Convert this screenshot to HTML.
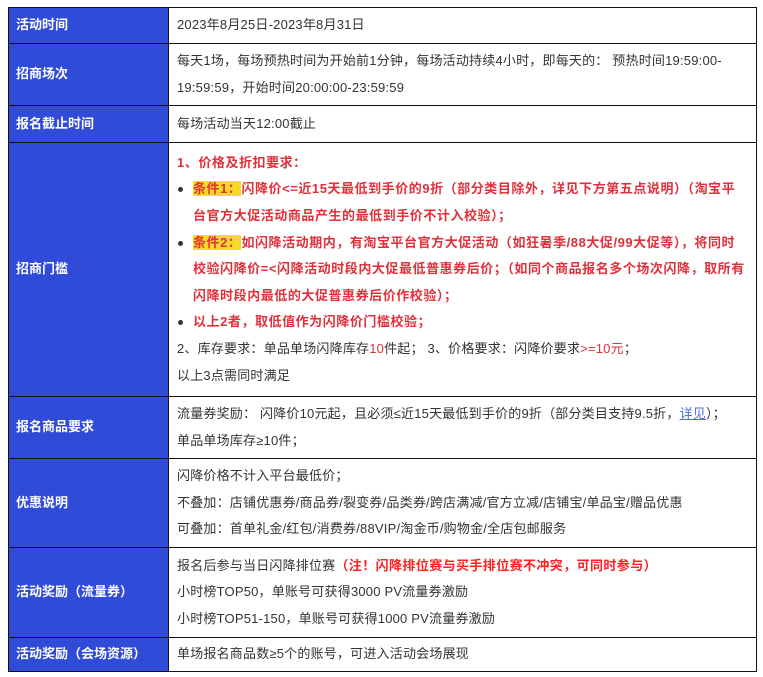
<!DOCTYPE html>
<html><head><meta charset="utf-8"><style>
body{margin:0;background:#fff;font-family:"Liberation Sans","Noto Sans CJK SC",sans-serif;font-size:13px;color:#333;}
table{position:absolute;left:8px;top:7px;border-collapse:collapse;width:749px;table-layout:fixed;}
td{border:1.5px solid #111;padding:0 0 0 8px;vertical-align:middle;line-height:26.6px;white-space:nowrap;letter-spacing:0.2px;}
td.h{background:#2f4bd8;color:#fff;font-weight:bold;width:152px;padding-left:7px;letter-spacing:0;}
.r{color:#e2303a;font-weight:bold;letter-spacing:0.55px;}
.rr{color:#ff2020;font-weight:bold;letter-spacing:0.4px;}
.hl{background:#f7d92a;}
.o{color:#e2303a;}
ul{margin:0;padding:0;list-style:none;}
li{position:relative;padding-left:16px;}
li:before{content:"";position:absolute;left:1px;top:11px;width:5px;height:5px;border-radius:50%;background:#333;}
a{color:#4a6fe0;text-decoration:underline;}
</style></head><body>
<table>
<tr style="height:36px"><td class="h">活动时间</td><td>2023年8月25日-2023年8月31日</td></tr>
<tr style="height:62px"><td class="h">招商场次</td><td>每天1场，每场预热时间为开始前1分钟，每场活动持续4小时，即每天的： 预热时间19:59:00-<br>19:59:59，开始时间20:00:00-23:59:59</td></tr>
<tr style="height:37px"><td class="h">报名截止时间</td><td>每场活动当天12:00截止</td></tr>
<tr style="height:254px"><td class="h">招商门槛</td><td>
<div class="r">1、价格及折扣要求：</div>
<ul>
<li class="r"><span class="hl">条件1：</span>闪降价&lt;=近15天最低到手价的9折（部分类目除外，详见下方第五点说明）（淘宝平<br>台官方大促活动商品产生的最低到手价不计入校验）；</li>
<li class="r"><span class="hl">条件2：</span>如闪降活动期内，有淘宝平台官方大促活动（如狂暑季/88大促/99大促等），将同时<br>校验闪降价=&lt;闪降活动时段内大促最低普惠券后价；（如同个商品报名多个场次闪降，取所有<br>闪降时段内最低的大促普惠券后价作校验）；</li>
<li class="r">以上2者，取低值作为闪降价门槛校验；</li>
</ul>
<div>2、库存要求：单品单场闪降库存<span class="o">10</span>件起； 3、价格要求：闪降价要求<span class="o">&gt;=10元</span>；</div>
<div>以上3点需同时满足</div>
</td></tr>
<tr style="height:62px"><td class="h">报名商品要求</td><td>流量券奖励： 闪降价10元起，且必须≤近15天最低到手价的9折（部分类目支持9.5折，<a>详见</a>）；<br>单品单场库存≥10件；</td></tr>
<tr style="height:89px"><td class="h">优惠说明</td><td>闪降价格不计入平台最低价；<br>不叠加：店铺优惠券/商品券/裂变券/品类券/跨店满减/官方立减/店铺宝/单品宝/赠品优惠<br>可叠加：首单礼金/红包/消费券/88VIP/淘金币/购物金/全店包邮服务</td></tr>
<tr style="height:90px"><td class="h">活动奖励（流量券）</td><td>报名后参与当日闪降排位赛<span class="rr">（注！闪降排位赛与买手排位赛不冲突，可同时参与）</span><br>小时榜TOP50，单账号可获得3000 PV流量券激励<br>小时榜TOP51-150，单账号可获得1000 PV流量券激励</td></tr>
<tr style="height:34px"><td class="h">活动奖励（会场资源）</td><td>单场报名商品数≥5个的账号，可进入活动会场展现</td></tr>
</table>
</body></html>
